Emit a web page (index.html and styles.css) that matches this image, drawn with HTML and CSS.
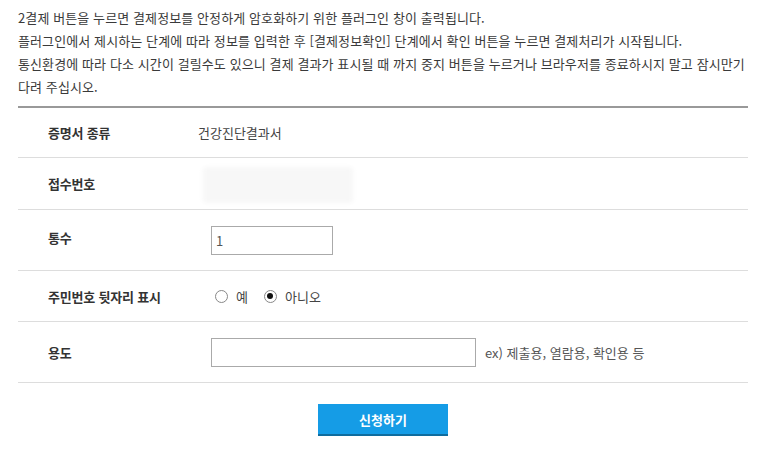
FILE: index.html
```html
<!DOCTYPE html>
<html lang="ko">
<head>
<meta charset="utf-8">
<title>신청</title>
<link rel="stylesheet" href="styles.css">
</head>
<body>
<div class="page">
  <div class="intro">
    <p>2결제 버튼을 누르면 결제정보를 안정하게 암호화하기 위한 플러그인 창이 출력됩니다.</p>
    <p>플러그인에서 제시하는 단계에 따라 정보를 입력한 후 [결제정보확인] 단계에서 확인 버튼을 누르면 결제처리가 시작됩니다.</p>
    <p>통신환경에 따라 다소 시간이 걸릴수도 있으니 결제 결과가 표시될 때 까지 중지 버튼을 누르거나 브라우저를 종료하시지 말고 잠시만기다려 주십시오.</p>
  </div>
  <div class="form">
    <div class="row r1">
      <div class="label">증명서 종류</div>
      <div class="value">건강진단결과서</div>
    </div>
    <div class="row r2">
      <div class="label">접수번호</div>
      <div class="value"><span class="blur"></span></div>
    </div>
    <div class="row r3">
      <div class="label">통수</div>
      <div class="value"><input class="txt short" type="text" value="1"></div>
    </div>
    <div class="row r4">
      <div class="label">주민번호 뒷자리 표시</div>
      <div class="value radios">
        <label class="opt"><input type="radio" name="ssn" class="rad"><span>예</span></label>
        <label class="opt"><input type="radio" name="ssn" class="rad" checked><span>아니오</span></label>
      </div>
    </div>
    <div class="row r5">
      <div class="label">용도</div>
      <div class="value"><input class="txt long" type="text"><span class="hint">ex) 제출용, 열람용, 확인용 등</span></div>
    </div>
  </div>
  <div class="actions">
    <button class="submit" type="button">신청하기</button>
  </div>
</div>
</body>
</html>
```

FILE: styles.css
```css
html, body {
  margin: 0;
  padding: 0;
  background: #fff;
}
body {
  font-family: "Noto Sans CJK KR", "Noto Sans", sans-serif;
  font-size: 13px;
  color: #333;
}
.page {
  width: 730px;
  padding: 6px 0 0 18px;
}
.intro p {
  margin: 0;
  line-height: 23px;
  letter-spacing: 0.1px;
  word-break: break-all;
  color: #3a3a3a;
}
.intro {
  padding-bottom: 8px;
  border-bottom: 2px solid #999;
}
.row {
  display: grid;
  grid-template-columns: 180px 1fr;
  align-items: center;
  border-bottom: 1px solid #ddd;
}
.r1 { height: 49px; }
.r2 { height: 51px; }
.r3 { height: 60px; }
.r4 { height: 50px; }
.r5 { height: 60px; }
.label {
  padding-left: 30px;
  font-weight: bold;
  color: #333;
  letter-spacing: -0.2px;
}
.r3 .label { margin-top: -6px; }
.value {
  display: flex;
  align-items: center;
  color: #444;
}
.blur {
  display: block;
  margin-left: 5px;
  margin-top: 2px;
  width: 150px;
  height: 36px;
  background: #f7f7f7;
  border-radius: 4px;
  filter: blur(2px);
}
.txt {
  box-sizing: border-box;
  height: 29px;
  border: 1px solid #aaa;
  margin: 0 0 0 13px;
  padding: 0 4px;
  font-family: "Noto Sans CJK KR", "Noto Sans", sans-serif;
  font-size: 13px;
  color: #555;
  background: #fff;
  outline: none;
}
.short { width: 122px; }
.long { width: 265px; }
.hint {
  margin-left: 9px;
  color: #555;
  font-size: 13px;
}
.opt {
  display: flex;
  align-items: center;
}
.opt:first-child { margin-left: 17px; margin-right: 16px; }
.rad {
  appearance: none;
  -webkit-appearance: none;
  box-sizing: border-box;
  width: 13px;
  height: 13px;
  margin: 0 8px 0 0;
  border: 1px solid #888;
  border-radius: 50%;
  background: #fff;
  position: relative;
}
.rad:checked::after {
  content: "";
  position: absolute;
  left: 2.5px;
  top: 2.5px;
  width: 6px;
  height: 6px;
  border-radius: 50%;
  background: #111;
}
.actions {
  display: flex;
  justify-content: center;
  padding-top: 21px;
}
.submit {
  box-sizing: border-box;
  width: 130px;
  height: 32px;
  border: 0;
  border-bottom: 2px solid #0f6c9e;
  background: #159ce6;
  color: #fff;
  font-family: "Noto Sans CJK KR", "Noto Sans", sans-serif;
  font-size: 13px;
  font-weight: bold;
  padding: 0;
}
```
